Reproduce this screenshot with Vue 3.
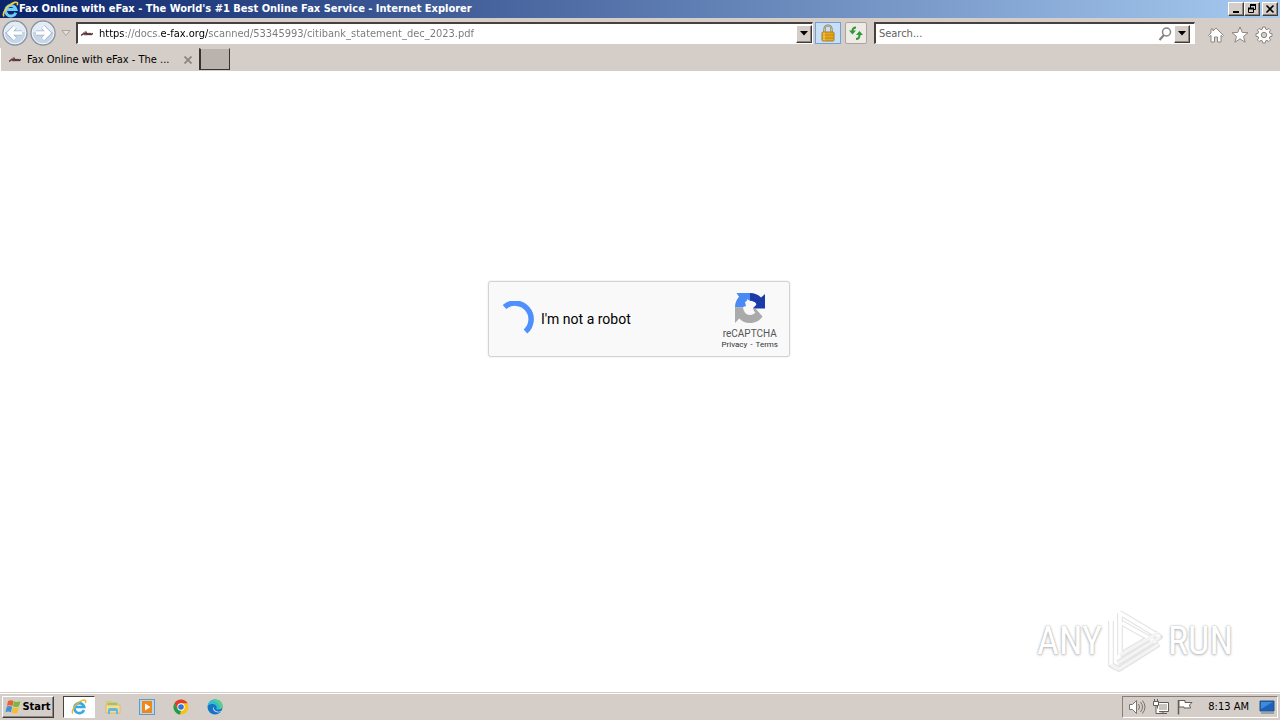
<script setup>
import { ref } from 'vue'

const address = ref('https://docs.e-fax.org/scanned/53345993/citibank_statement_dec_2023.pdf')
const query = ref('')
</script>

<template>
  <div class="desktop">
    <header class="titlebar">
      <svg class="ie" viewBox="0 0 16 16" aria-hidden="true">
        <path d="M13 11A5 5 0 1 1 13.200 8H4.600" fill="none" stroke="#6dcdf8" stroke-width="2.800" />
        <path d="M2 14.500C-.8 12 6 3 12 1.300c2.600-.7 3.200.7 2.200 2.700" fill="none" stroke="#f6cf3b" stroke-width="1.500" />
      </svg>
      <h1>Fax Online with eFax - The World's #1 Best Online Fax Service - Internet Explorer</h1>
      <div class="window-buttons">
        <button class="bevel" aria-label="Minimize"><svg viewBox="0 0 12 10"><path d="M3 8h6" stroke="#000" stroke-width="2" /></svg></button>
        <button class="bevel" aria-label="Restore"><svg viewBox="0 0 12 10"><path d="M4.500 4V1.500h5v4H8M2.500 4.500h5v4h-5z" fill="none" stroke="#000" /><path d="M4 1h6M2 4.500h6" stroke="#000" stroke-width="2" /></svg></button>
        <button class="bevel close" aria-label="Close"><svg viewBox="0 0 12 10"><path d="M2.500 1.500l7 7M9.500 1.500l-7 7" stroke="#000" stroke-width="1.600" /></svg></button>
      </div>
    </header>

    <nav class="toolbar">
      <div class="history">
        <button aria-label="Back">
          <svg viewBox="0 0 26 26"><circle cx="13" cy="13" r="12" fill="#c6d6e6" stroke="#8795a6" stroke-width="1.400" /><circle cx="13" cy="13" r="10.800" fill="none" stroke="#f3f7fb" /><path d="M3 12a10 10 0 0 1 20 0z" fill="#e3ecf4" /><path d="M20 13H8M13 7l-6 6 6 6" fill="none" stroke="#9fb4cb" stroke-width="5" /><path d="M20 13H8M13 7l-6 6 6 6" fill="none" stroke="#fff" stroke-width="3.400" /></svg>
        </button>
        <button aria-label="Forward">
          <svg viewBox="0 0 26 26"><circle cx="13" cy="13" r="12" fill="#c6d6e6" stroke="#8795a6" stroke-width="1.400" /><circle cx="13" cy="13" r="10.800" fill="none" stroke="#f3f7fb" /><path d="M3 12a10 10 0 0 1 20 0z" fill="#e3ecf4" /><path d="M6 13h12M13 7l6 6-6 6" fill="none" stroke="#9fb4cb" stroke-width="5" /><path d="M6 13h12M13 7l6 6-6 6" fill="none" stroke="#fff" stroke-width="3.400" /></svg>
        </button>
        <button class="recent" aria-label="Recent pages">
          <svg viewBox="0 0 10 8"><path d="M1 1.500h8L5 6.500z" fill="#e4e0da" stroke="#aaa49d" /></svg>
        </button>
      </div>
      <div class="field address">
        <svg class="efax" viewBox="0 0 12 8" aria-hidden="true"><path d="M0 5.500l3-2 1 1 1-2 1 2 1-1 1 1 1-1 1 1 2-1" fill="none" stroke="#55333c" stroke-width="1.500" /><path d="M2 3l3-1.500" stroke="#c66" /></svg>
        <input v-model="address" type="text" aria-label="Address" spellcheck="false" />
        <button class="bevel drop" aria-label="Show address list"><svg viewBox="0 0 8 5"><path d="M0 0h8L4 4.500z" /></svg></button>
      </div>
      <button class="lock" aria-label="Security report">
        <svg viewBox="0 0 16 18"><path d="M4.500 9V5a3.500 3.500 0 0 1 7 0v4" fill="none" stroke="#8b7a50" stroke-width="2.200" /><path d="M4.500 9V5a3.500 3.500 0 0 1 7 0v4" fill="none" stroke="#d8cfae" stroke-width=".8" /><rect x="2" y="8" width="12" height="9" rx="1" fill="#e6a91d" stroke="#ad7b1b" /><path d="M2.500 11h11M2.500 14h11" stroke="#bd8513" /><path d="M4 8.500v8" stroke="#f9d767" /></svg>
      </button>
      <button class="refresh" aria-label="Refresh">
        <svg viewBox="0 0 16 16"><path d="M8 2.500C5.500 2.500 4.500 4 4.500 6" fill="none" stroke="#2f9a35" stroke-width="2" /><path d="M1 5.500h7l-3.500 4z" fill="#2f9a35" /><path d="M8 14c2.500 0 3.500-1.500 3.500-4" fill="none" stroke="#2f9a35" stroke-width="2" /><path d="M8 10h7l-3.500-4z" fill="#2f9a35" /></svg>
      </button>
      <div class="field search">
        <input v-model="query" type="text" placeholder="Search..." aria-label="Search" />
        <button class="glass" aria-label="Go"><svg viewBox="0 0 14 14"><circle cx="8.500" cy="5" r="4" fill="none" stroke="#85817e" stroke-width="1.500" /><path d="M6 8l-4.500 5" stroke="#85817e" stroke-width="2.200" /></svg></button>
        <button class="bevel drop" aria-label="Search options"><svg viewBox="0 0 8 5"><path d="M0 0h8L4 4.500z" /></svg></button>
      </div>
      <div class="tools">
        <button aria-label="Home"><svg viewBox="0 0 18 18"><path d="M9 2l7.500 7.500-1 1L14 9.500V16h-3.500v-5h-3v5H4V9.500l-1.500 1-1-1L4 7V3h2v2z" fill="#fff" stroke="#8c8782" /></svg></button>
        <button aria-label="Favorites"><svg viewBox="0 0 18 18"><path d="M9 1l2.200 5.400 5.800.3-4.500 3.700 1.600 5.800L9 12.900l-5.100 3.300 1.600-5.800L1 6.700l5.800-.3z" fill="#fff" stroke="#8c8782" /></svg></button>
        <button aria-label="Tools"><svg viewBox="0 0 18 18"><path d="M7.700 1h2.600l.4 2.100 1.300.6 1.900-1.300 1.700 1.700-1.300 1.900.6 1.300 2.100.4v2.600l-2.100.4-.6 1.300 1.300 1.900-1.700 1.700-1.900-1.300-1.300.6-.4 2.100H7.700l-.4-2.100-1.300-.6-1.900 1.300-1.700-1.700L3.700 12l-.6-1.300L1 10.300V7.700l2.100-.4L3.700 6 2.400 4.100l1.700-1.700L6 3.700l1.300-.6z" fill="#fff" stroke="#8c8782" /><circle cx="9" cy="9" r="2.700" fill="#d5cec8" stroke="#8c8782" /></svg></button>
      </div>
    </nav>

    <div class="tabs">
      <div class="tab">
        <svg class="efax" viewBox="0 0 12 8" aria-hidden="true"><path d="M0 5.500l3-2 1 1 1-2 1 2 1-1 1 1 1-1 1 1 2-1" fill="none" stroke="#55333c" stroke-width="1.500" /><path d="M2 3l3-1.500" stroke="#c66" /></svg>
        <span>Fax Online with eFax - The ...</span>
        <button aria-label="Close tab"><svg viewBox="0 0 8 8"><path d="M.5.500l7 7M7.500.500l-7 7" stroke="#8b8580" stroke-width="1.800" /></svg></button>
      </div>
      <button class="new-tab" aria-label="New tab"></button>
    </div>

    <main class="page">
      <section class="captcha">
        <svg class="spinner" viewBox="0 0 34 36" role="img" aria-label="Loading"><path d="M4.500 6A15.300 15.300 0 0 1 25.500 30.500" fill="none" stroke="#4d90fe" stroke-width="5.500" /></svg>
        <p>I'm not a robot</p>
        <div class="brand">
          <svg viewBox="0 0 32 32" aria-hidden="true">
            <path d="M16 1v8.500L13.500 7l-1.800 4.300c1.200.9 1.800 2.400 1.800 4.200H1C1 11 2.500 7.300 5 4.700L2.500 1z" fill="#4a8af4" />
            <path d="M16 1c4.500 0 8.300 1.500 11 4.500L31 2v14.500H18l4.500-4.200C21 10 19 8.700 16 8.700z" fill="#1c3aa9" />
            <path d="M1 15.500h8.500C9.500 20 12 23 16 23c2.300 0 4.200-.8 5.400-2.400L18 17h4l6.500 7.500C25.700 28.700 21.500 31 16 31c-4.400 0-8-1.500-10.700-4.500L1 31z" fill="#aaa" />
            <path d="M15 8l2 3 4-1 1 3-3 3 1 4-4 1-2-3-4 1-1-4 3-1-1-4z" fill="#f9f9f9" />
          </svg>
          <strong>reCAPTCHA</strong>
          <small><a href="#privacy">Privacy</a><span>-</span><a href="#terms">Terms</a></small>
        </div>
      </section>
      <div class="watermark">
        <span>ANY</span>
        <svg viewBox="0 0 60 64" aria-hidden="true"><path d="M15 4v42M15 4l40 24-42 26M15 46l38-22M17 14l34 19M6 12v44l8 4 40-25" fill="none" stroke="#ccc" stroke-width="6" stroke-linejoin="round" opacity=".45" /><path d="M15 4v42M15 4l40 24-42 26M15 46l38-22M17 14l34 19M6 12v44l8 4 40-25" fill="none" stroke="#e2e2e2" stroke-width="4.600" stroke-linejoin="round" /><path d="M15 4v42M15 4l40 24M17 14l34 19M6 12v44" fill="none" stroke="#fff" stroke-width="3.600" stroke-linejoin="round" /><path d="M55 28L13 54M15 46l38-22M6 56l8 4 40-25" fill="none" stroke="#f4f4f4" stroke-width="3.200" stroke-linejoin="round" /></svg>
        <span>RUN</span>
      </div>
    </main>

    <footer class="taskbar">
      <button class="bevel start">
        <svg viewBox="0 0 17 16" aria-hidden="true"><path d="M3 2c2-1 3.500-1 5.500 0L7.500 7C5.500 6 4 6 2 7z" fill="#e96032" /><path d="M9 2.300c2 1 3.500 1 6.500 0l-1.500 5c-2 1-3.500 1-6 0z" fill="#78b83a" /><path d="M1.700 7.700c2-1 3.500-1 5.500 0l-1.200 5.500c-2-1-3.500-1-5.500 0z" fill="#458fd7" /><path d="M7.800 8.200c2 1 3.500 1 5.900 0l-1.200 5.500c-2 1-3.500 1-5.900 0z" fill="#f5bc35" /></svg>
        <span>Start</span>
      </button>
      <div class="launchers">
        <button class="active" aria-label="Internet Explorer"><svg viewBox="0 0 16 16"><path d="M13 11A5 5 0 1 1 13.200 8H4.600" fill="none" stroke="#38a9e4" stroke-width="2.700" /><path d="M2 14.500C-.8 12 6 3 12 1.300c2.600-.7 3.200.7 2.200 2.700" fill="none" stroke="#e9b72e" stroke-width="1.500" /></svg></button>
        <button aria-label="File Explorer"><svg viewBox="0 0 16 16"><path d="M1 3l1-1h4l1 1h6v4H1z" fill="#e3c766" /><path d="M3 4h9v3H3z" fill="#7fcb89" /><path d="M1 6h14v8H1z" fill="#f5df8f" stroke="#d3b458" stroke-width=".7" /><path d="M3 15v-4q0-2 2-2h6q2 0 2 2v4h-2v-3H5v3z" fill="#65b5df" /></svg></button>
        <button aria-label="Media Player"><svg viewBox="0 0 16 16"><rect x=".5" y=".5" width="15" height="15" fill="#b7d7ed" stroke="#5e9bc8" /><rect x="3" y="2" width="10" height="12" fill="#f28719" /><path d="M6 4.500L11.500 8 6 11.500z" fill="#fff" /></svg></button>
        <button aria-label="Chrome"><svg viewBox="0 0 16 16"><circle cx="8" cy="8" r="7.500" fill="#fbc116" /><path d="M1.500 4.250A7.500 7.500 0 0 1 14.500 4.250H8L4.750 9.900z" fill="#e33b2e" /><path d="M1.500 4.250L4.750 9.900 8 11.500l-1 4A7.500 7.500 0 0 1 1.500 4.250z" fill="#229b4e" /><circle cx="8" cy="8" r="3.700" fill="#fff" /><circle cx="8" cy="8" r="2.800" fill="#3474d8" /></svg></button>
        <button aria-label="Edge"><svg viewBox="0 0 16 16"><circle cx="8" cy="8" r="7.500" fill="#1674c6" /><path d="M.6 7C1 3 4 .500 8 .500c4.500 0 7.500 3 7.500 6 0 2.500-2 4-4.500 4-1.500 0-2-.7-1.500-1.500C10.500 7 8 5 5 5 3 5 1.500 5.800.6 7z" fill="#36bfca" /><path d="M8 .5c4.500 0 7.500 3 7.500 6 0 2-1 3.300-2.700 3.800C13 6 11 2 5 1.200 6 .700 7 .500 8 .500z" fill="#5bd083" /><path d="M7 7.500c-1 3 2 5.500 5 5.200l2.800-.7C14 13 11 14 9 13 6 12 5.500 9.500 7 7.500z" fill="#d5e4ee" /></svg></button>
      </div>
      <div class="tray">
        <svg viewBox="0 0 18 16" role="img" aria-label="Volume"><path d="M1.500 5.500h3l4-4v13l-4-4h-3z" fill="#fff" stroke="#77726e" /><path d="M10.500 5q2 3 0 6M12.500 3q4 5 0 10M14.500 1.500q5 6.500 0 13" fill="none" stroke="#77726e" /></svg>
        <svg viewBox="0 0 18 16" role="img" aria-label="Network"><path d="M5.500 3.500h11v9h-11zM7 14.500h8M11 12.500v2" fill="#fff" stroke="#625d59" /><path d="M7 5h8v6H7z" fill="#c8c4c0" /><path d="M1.500 2.500h5v4h-5zM2.500 0v2M5.500 0v2M4 6.500v8h4" fill="#fff" stroke="#625d59" /></svg>
        <svg viewBox="0 0 18 16" role="img" aria-label="Action Center"><path d="M2.500 1v14.500" stroke="#625d59" stroke-width="1.500" /><path d="M3 1.500h6v2h7L13.500 6l1 3H8v-1H3z" fill="#fff" stroke="#625d59" /></svg>
        <time>8:13 AM</time>
        <button aria-label="Show desktop"><svg viewBox="0 0 16 16"><path d="M1 2h14v10H1z" fill="#1c62bd" stroke="#27517d" /><path d="M2 3h12L2 10z" fill="#3d8be0" /><path d="M2 14h13" stroke="#53779d" /></svg></button>
      </div>
    </footer>
  </div>
</template>

<style>
body {
  margin: 0;
}
</style>

<style scoped>
.desktop {
  display: flex;
  flex-direction: column;
  min-height: 100vh;
  background: #fff;
  color: #000;
  font: 11px/14px Tahoma, "DejaVu Sans Condensed", "DejaVu Sans", sans-serif;
}
.desktop * {
  box-sizing: border-box;
}
button {
  display: flex;
  align-items: center;
  justify-content: center;
  flex: none;
  padding: 0;
  border: 0;
  background: none;
  color: inherit;
  font: inherit;
}
svg {
  display: block;
  flex: none;
}
.bevel {
  border: 1px solid;
  border-color: #fff #403c39 #403c39 #fff;
  background: #d5cec8;
  box-shadow: inset -1px -1px #8d8782;
}
.titlebar {
  display: flex;
  align-items: center;
  height: 18px;
  padding: 0 2px;
  background: linear-gradient(90deg, #0b246a, #a6caf0);
  color: #fff;
}
.ie {
  width: 17px;
  height: 17px;
}
h1 {
  flex: 1;
  margin: 0;
  font-size: 11px;
  line-height: 14px;
  white-space: nowrap;
}
.window-buttons {
  display: flex;
}
.window-buttons button {
  width: 16px;
  height: 14px;
}
.window-buttons .close {
  margin-left: 2px;
}
.window-buttons svg {
  width: 12px;
  height: 10px;
}
.toolbar {
  display: flex;
  align-items: center;
  height: 30px;
  padding: 0 7px 0 2px;
  background: #d5cec8;
}
.history {
  display: flex;
  align-items: center;
  width: 74px;
  gap: 2px;
}
.history svg {
  width: 26px;
  height: 26px;
}
.history .recent {
  margin-left: 3px;
}
.history .recent svg {
  width: 10px;
  height: 8px;
}
.field {
  display: flex;
  align-items: center;
  height: 22px;
  border: 1px solid;
  border-width: 2px 1px 1px 2px;
  border-color: #46403f #fff #fff #46403f;
  background: #fff;
}
.address {
  flex: 740;
  padding-left: 3px;
}
.search {
  flex: 318;
  margin-left: 7px;
  padding-right: 4px;
}
.efax {
  width: 12px;
  height: 8px;
}
input {
  flex: 1;
  min-width: 0;
  height: 18px;
  padding: 0 3px;
  border: 0;
  outline: 0;
  background: none;
  color: #66615f;
  font: inherit;
}
.address input {
  padding: 0;
  margin-left: 6px;
  background: linear-gradient(90deg, #000 26px, #777 26px 61px, #000 61px 109px, #777 109px);
  background-clip: text;
  color: transparent;
}
input::placeholder {
  color: #66615f;
  opacity: 1;
}
.drop {
  width: 16px;
  height: 18px;
}
.drop svg {
  width: 8px;
  height: 5px;
}
.lock {
  width: 26px;
  height: 22px;
  margin-left: 2px;
  border: 1px solid #6f9fdd;
  background: #c8dff8;
}
.lock svg {
  width: 16px;
  height: 18px;
}
.refresh {
  width: 22px;
  height: 22px;
  margin-left: 4px;
  border: 1px solid #aaa5a0;
  border-radius: 2px;
  background: #eeebe7;
}
.refresh svg {
  width: 16px;
  height: 16px;
}
.glass {
  width: 18px;
}
.glass svg {
  width: 14px;
  height: 14px;
}
.tools {
  display: flex;
  gap: 6px;
  margin-left: 12px;
  padding-top: 4px;
}
.tools svg {
  width: 18px;
  height: 18px;
}
.tabs {
  display: flex;
  height: 23px;
  background: #d5cec8;
}
.tab {
  display: flex;
  align-items: center;
  width: 199px;
  padding: 0 7px 0 8px;
  border-left: 1px solid #fff;
}
.tab span {
  flex: 1;
  margin-left: 6px;
  white-space: nowrap;
}
.tab button svg {
  width: 8px;
  height: 8px;
}
.new-tab {
  width: 31px;
  height: 22px;
  border: 1px solid #38312e;
  border-width: 1px 1px 1px 2px;
  border-top-color: #d5cec8;
  background: #b9b2ad;
}
.page {
  position: relative;
  flex: 1;
  display: flex;
  justify-content: center;
  padding: 210px 2px 0 0;
}
.captcha {
  display: flex;
  align-items: center;
  align-self: flex-start;
  width: 302px;
  height: 76px;
  padding: 0 11px;
  border: 1px solid #d3d3d3;
  border-radius: 3px;
  background: #f9f9f9;
  box-shadow: 0 0 2px #ddd;
}
.spinner {
  width: 34px;
  height: 36px;
}
.captcha p {
  flex: 1;
  margin: 0 0 0 7px;
  font: 14px/18px Roboto, sans-serif;
}
.brand {
  display: flex;
  flex-direction: column;
  align-items: center;
  padding-top: 4px;
  color: #555;
  font-family: Roboto, sans-serif;
}
.brand svg {
  width: 32px;
  height: 32px;
}
.brand strong {
  margin-top: 4px;
  font-size: 10px;
  font-weight: 400;
  line-height: 12px;
}
.brand small {
  display: flex;
  gap: 3px;
  font-size: 8px;
  line-height: 10px;
  color: #333;
}
.brand a {
  color: inherit;
  text-decoration: none;
}
.watermark {
  position: absolute;
  right: 47px;
  bottom: 20px;
  display: flex;
  align-items: center;
  gap: 3px;
  color: #fff;
  font: 38px/40px "Liberation Sans Narrow", "Roboto Condensed", "DejaVu Sans Condensed", sans-serif;
  text-shadow: 0 0 2px #aaa, 0 1px 3px #bbb;
}
.watermark svg {
  width: 60px;
  height: 64px;
}
.taskbar {
  display: flex;
  align-items: center;
  height: 27px;
  padding: 0 2px;
  border-top: 1px solid #fff;
  background: #d5cec8;
  box-shadow: 0 -1px #d5cec8;
}
.start {
  gap: 0;
  width: 52px;
  height: 22px;
  font-weight: 700;
}
.start svg {
  width: 17px;
  height: 16px;
}
.launchers {
  display: flex;
  flex: 1;
  gap: 2px;
  margin-left: 9px;
}
.launchers button {
  width: 32px;
  height: 22px;
}
.launchers .active {
  border: 1px solid;
  border-color: #49433f #fff #fff #49433f;
  background: #fff;
}
.launchers svg {
  width: 16px;
  height: 16px;
}
.tray {
  display: flex;
  align-items: center;
  gap: 6px;
  height: 22px;
  padding: 0 2px 0 5px;
  border: 1px solid;
  border-color: #85807c #fff #fff #85807c;
}
.tray svg {
  width: 18px;
  height: 16px;
}
.tray time {
  margin: 0 4px 0 8px;
}
.tray button svg {
  width: 16px;
  height: 16px;
}
</style>
